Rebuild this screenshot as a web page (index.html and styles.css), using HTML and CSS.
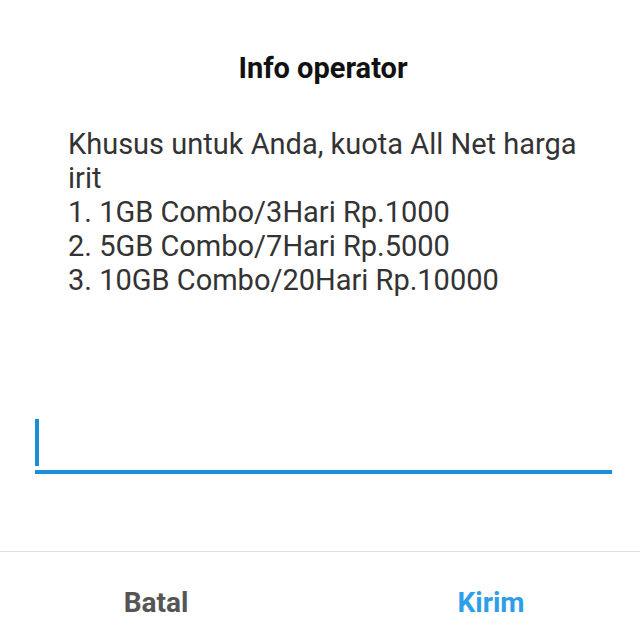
FILE: index.html
```html
<!doctype html>
<html lang="en">
<head>
  <meta charset="utf-8">
  <title>Info operator</title>
  <link rel="stylesheet" href="styles.css">
</head>
<body>
<div class="dialog">
  <h1 class="dialog__title">Info operator</h1>
  <div class="dialog__message">
    Khusus untuk Anda, kuota All Net harga irit<br>
    1. 1GB Combo/3Hari Rp.1000<br>
    2. 5GB Combo/7Hari Rp.5000<br>
    3. 10GB Combo/20Hari Rp.10000
  </div>
  <div class="dialog__field">
    <span class="dialog__cursor"></span>
  </div>
  <div class="dialog__actions">
    <button type="button" class="button button--cancel">Batal</button>
    <button type="button" class="button button--send">Kirim</button>
  </div>
</div>
</body>
</html>
```

FILE: styles.css
```css
body {
  margin: 0;
  background-color: #ffffff;
  font-family: Roboto, "Noto Sans", Arial, sans-serif;
  overflow: hidden;
}

.dialog {
  width: 640px;
  height: 640px;
  display: flex;
  flex-direction: column;
}

.dialog__title {
  margin: 0;
  padding: 52px 0 0 6px;
  font-size: 29px;
  font-weight: 700;
  line-height: 32px;
  text-align: center;
  color: #111111;
}

.dialog__message {
  margin-top: 43px;
  padding: 0 50px 0 68px;
  font-size: 29px;
  line-height: 34px;
  color: #333333;
}

.dialog__field {
  margin: 122px 28px 0 35px;
  height: 51px;
  border-bottom: 4px solid #1a8fd8;
  display: flex;
  align-items: flex-end;
}

.dialog__cursor {
  width: 4px;
  height: 47px;
  margin-bottom: 4px;
  background-color: #1a8fd8;
}

.dialog__actions {
  margin-top: auto;
  height: 88px;
  border-top: 1px solid #dddddd;
  display: grid;
  grid-template-columns: 312px 298px;
  column-gap: 30px;
}

.button {
  border: none;
  background: none;
  font-family: Roboto, "Noto Sans", Arial, sans-serif;
  font-size: 28px;
  font-weight: 700;
  padding: 13px 0 0 0;
}

.button--cancel {
  color: #555555;
}

.button--send {
  color: #2f9ee8;
}
```
